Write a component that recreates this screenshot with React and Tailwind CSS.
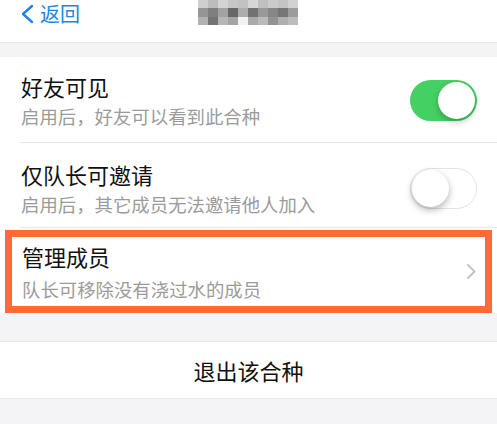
import React from 'react';

const blurCells = [
  'bg-[#cfcfcf]', 'bg-[#bdbdbd]', 'bg-[#d4d4d4]', 'bg-[#c6c6c6]', 'bg-[#c2c2c2]', 'bg-[#d6d6d6]', 'bg-[#bfbfbf]', 'bg-[#cbcbcb]', 'bg-[#c4c4c4]', 'bg-[#d2d2d2]',
  'bg-[#959595]', 'bg-[#7f7f7f]', 'bg-[#a2a2a2]', 'bg-[#676767]', 'bg-[#adadad]', 'bg-[#727272]', 'bg-[#999999]', 'bg-[#868686]', 'bg-[#767676]', 'bg-[#9c9c9c]',
  'bg-[#b2b2b2]', 'bg-[#747474]', 'bg-[#b6b6b6]', 'bg-[#a4a4a4]', 'bg-[#f2f2f2]', 'bg-[#aaaaaa]', 'bg-[#bbbbbb]', 'bg-[#939393]', 'bg-[#afafaf]', 'bg-[#bcbcbc]',
];

function Toggle({ on }) {
  return on ? (
    <div className="w-[67px] h-[41px] rounded-full bg-[#45d063] flex items-center justify-end pr-[2px] flex-shrink-0">
      <div className="w-[37px] h-[37px] rounded-full bg-white shadow-[0_3px_6px_rgba(0,0,0,0.25)]" />
    </div>
  ) : (
    <div className="w-[67px] h-[41px] rounded-full bg-white border-[1.5px] border-[#e3e3e6] flex items-center pl-[1px] flex-shrink-0">
      <div className="w-[37px] h-[37px] rounded-full bg-white shadow-[0_3px_7px_rgba(0,0,0,0.3)]" />
    </div>
  );
}

function SwitchRow({ title, sub, on, top }) {
  return (
    <div className={`flex items-center pl-[21px] pr-[20px] ${top}`}>
      <div className="flex-1 min-w-0">
        <div className="text-[22px] leading-[28px] text-[#111]">{title}</div>
        <div className="text-[18.4px] leading-[24px] mt-[4px] text-[#9b9b9b]">{sub}</div>
      </div>
      <Toggle on={on} />
    </div>
  );
}

export default function App() {
  return (
    <div className="w-[497px] h-[424px] overflow-hidden bg-[#f4f4f7] font-['Noto_Sans_CJK_SC','Noto_Sans',sans-serif]">
      {/* nav */}
      <header className="h-[43px] bg-white border-b border-[#e8e8ea] relative flex items-start">
        <div className="flex items-center pl-[20px] pt-[2px] text-[#2185e4]">
          <svg width="14" height="20" viewBox="0 0 14 20" fill="none">
            <polyline points="12,2 3,10 12,18" stroke="#2185e4" strokeWidth="2.4" strokeLinecap="round" strokeLinejoin="round" />
          </svg>
          <span className="ml-[6px] text-[20px] leading-[24px]">返回</span>
        </div>
        <div className="absolute left-[198px] top-0 w-[100px] h-[25px] grid grid-cols-10 blur-[0.6px]">
          {blurCells.map((c, i) => (
            <div key={i} className={c} />
          ))}
        </div>
      </header>

      <div className="h-[14px]" />

      <section className="bg-white">
        <SwitchRow title="好友可见" sub="启用后，好友可以看到此合种" on top="pt-[15px] pb-[14px]" />
        <div className="ml-[20px] h-px bg-[#e6e6e8]" />
        <SwitchRow title="仅队长可邀请" sub="启用后，其它成员无法邀请他人加入" on={false} top="pt-[17px] pb-[11px]" />
        <div className="ml-[20px] h-px bg-[#e6e6e8]" />
        <div className="pt-[2px] px-[5px]">
          <div className="border-[7px] border-[#ff6a36] h-[83px] flex items-center pl-[10px] pr-[8px]">
            <div className="flex-1">
              <div className="text-[22px] leading-[28px] text-[#111]">管理成员</div>
              <div className="text-[18.4px] leading-[24px] mt-[7px] text-[#9b9b9b]">队长可移除没有浇过水的成员</div>
            </div>
            <svg width="11" height="17" viewBox="0 0 11 17" fill="none">
              <polyline points="2,2 8.5,8.5 2,15" stroke="#c4c4c8" strokeWidth="2" strokeLinecap="round" strokeLinejoin="round" />
            </svg>
          </div>
        </div>
      </section>

      <div className="h-[28px]" />

      <section className="h-[58px] bg-white border-y border-[#e8e8ea] flex items-center justify-center">
        <span className="text-[22px] leading-[28px] text-[#111]">退出该合种</span>
      </section>
    </div>
  );
}
